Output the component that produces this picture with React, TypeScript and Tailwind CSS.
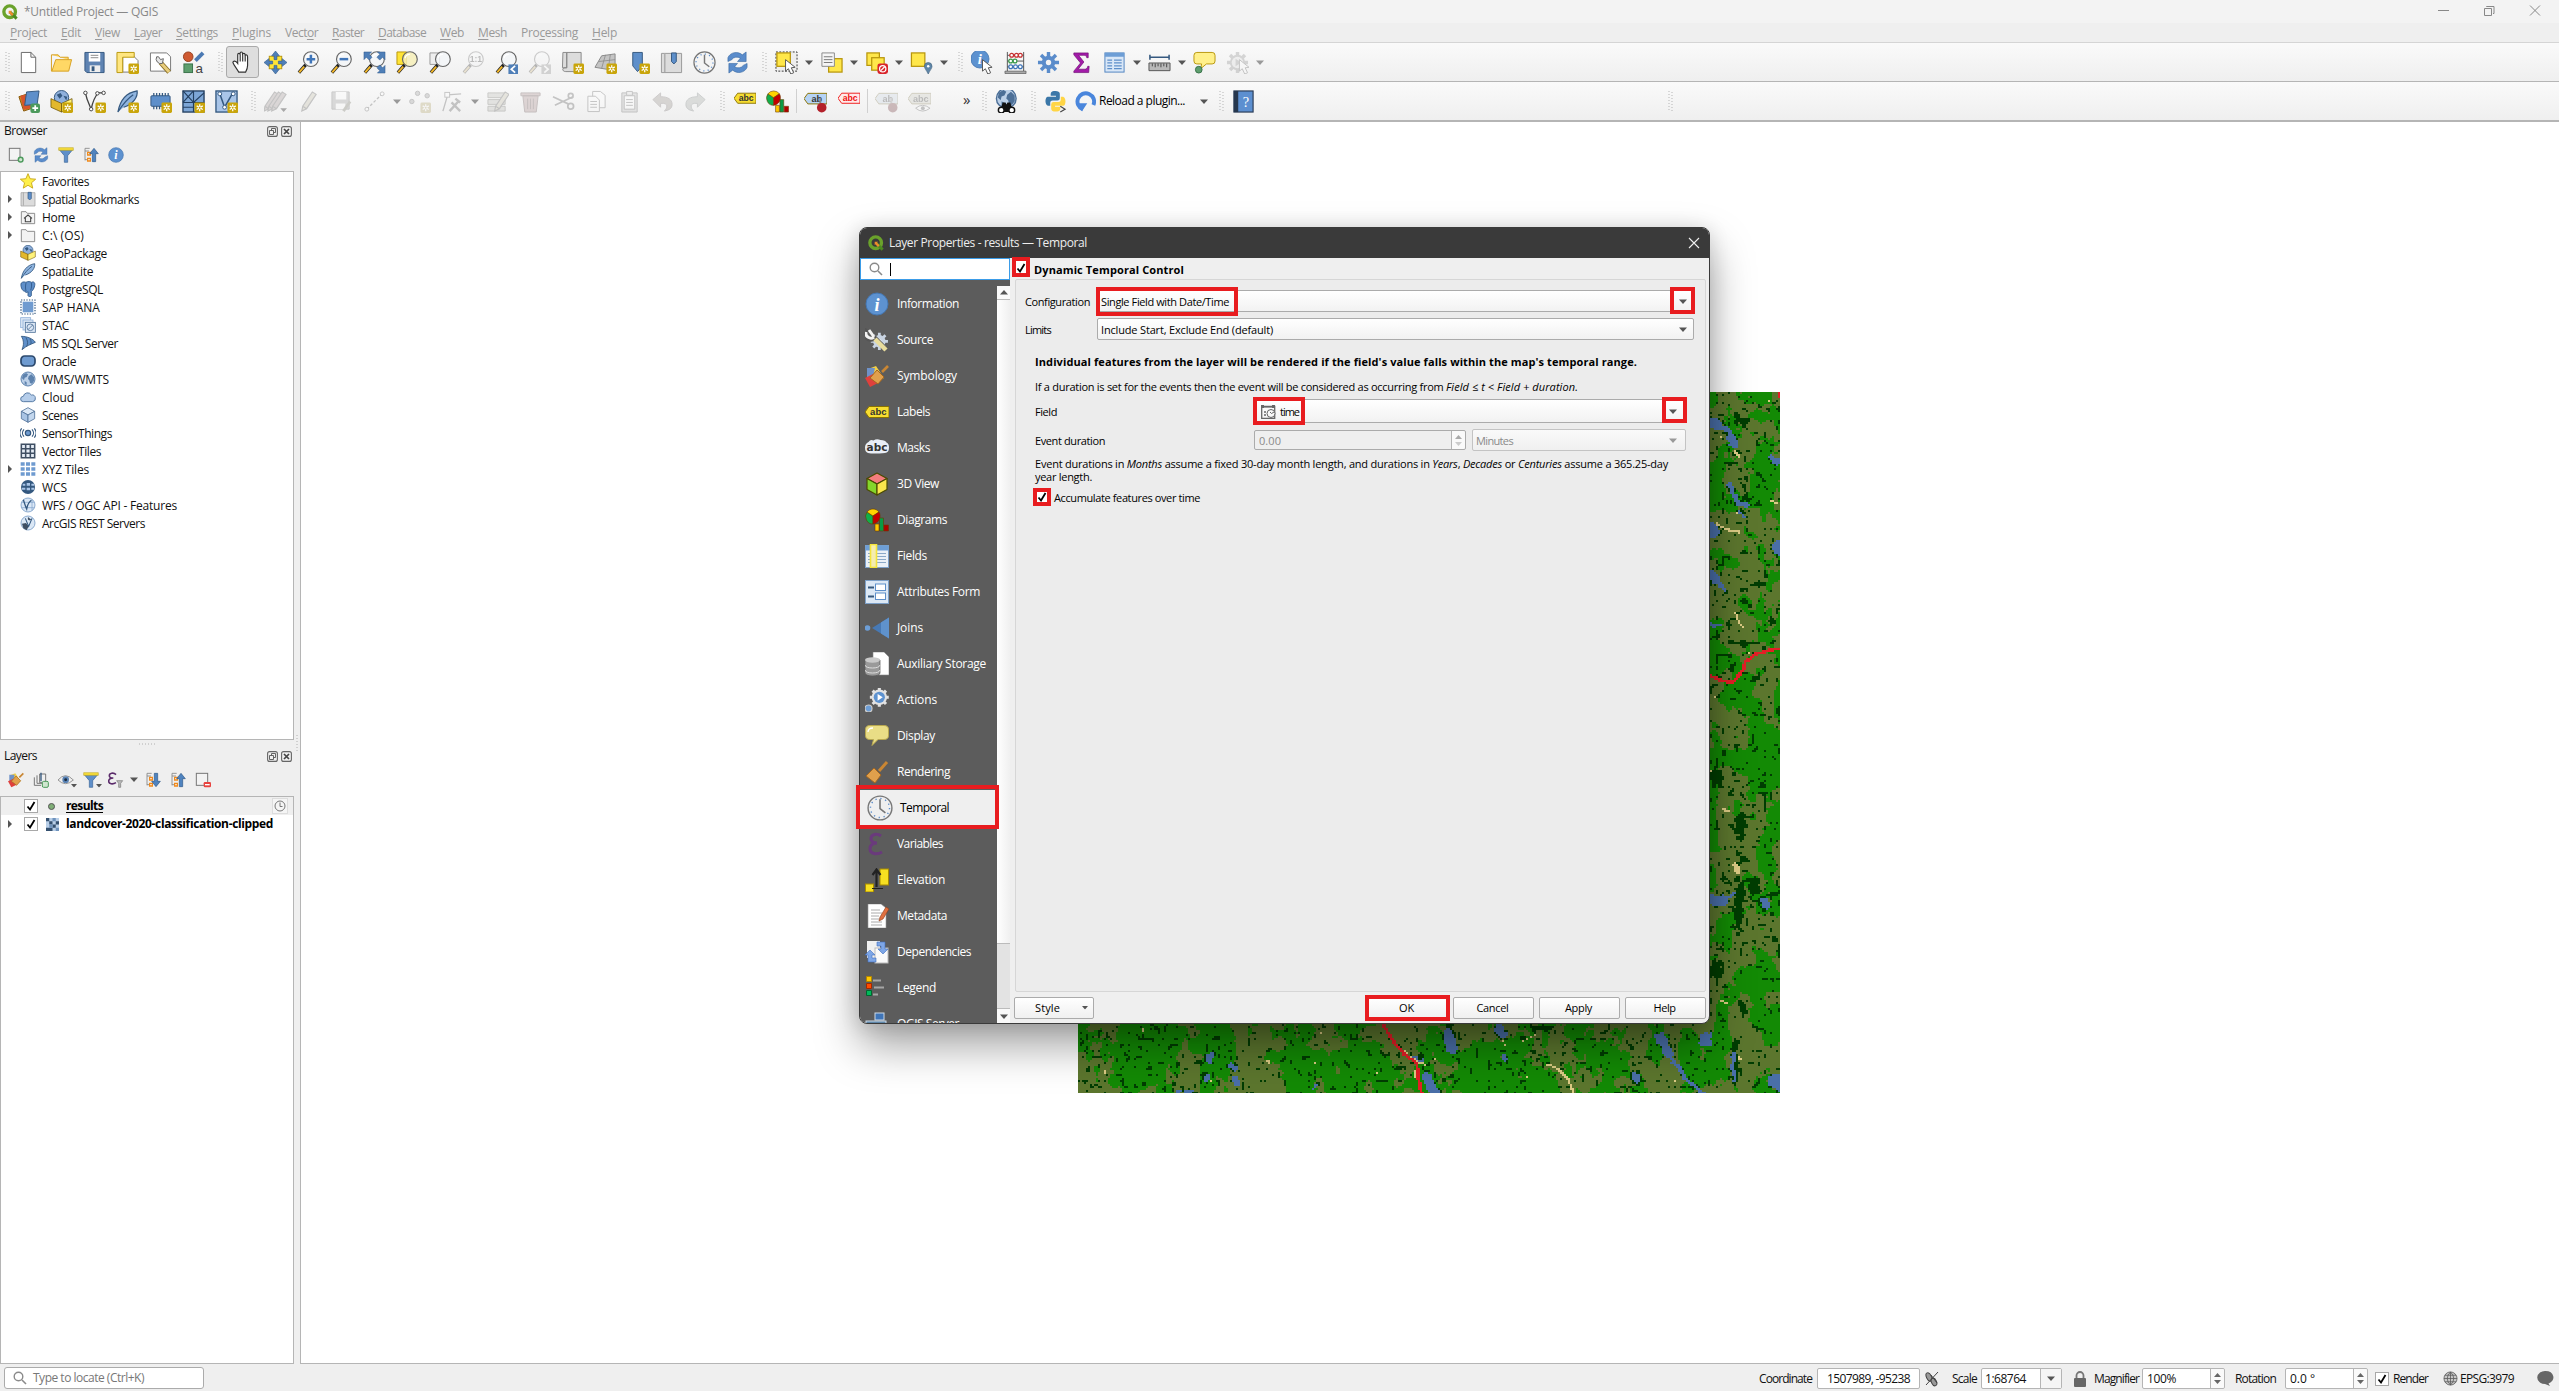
import React, { useLayoutEffect, useMemo, useRef, useState } from "react";

/* ---------- text fitted to a known advance width ---------- */
function Fit({ w, className = "", children }: { w: number; className?: string; children: React.ReactNode }) {
  const ref = useRef<HTMLSpanElement>(null);
  const [ls, setLs] = useState(0);
  useLayoutEffect(() => {
    const el = ref.current;
    if (!el) return;
    el.style.letterSpacing = "0px";
    const n = (el.textContent || "").length || 1;
    setLs((w - el.getBoundingClientRect().width) / n);
    el.style.letterSpacing = "";
  }, [w]);
  return (
    <span ref={ref} className={"inline-block shrink-0 whitespace-pre " + className} style={{ letterSpacing: ls }}>
      {children}
    </span>
  );
}

/* ---------- icons ---------- */
function S({ s = 24, off, children }: { s?: number; off?: boolean; children: React.ReactNode }) {
  return (
    <svg width={s} height={s} viewBox="0 0 24 24" fill="none" className={off ? "shrink-0 opacity-30 grayscale-[60%]" : "shrink-0"}>
      {children}
    </svg>
  );
}
const Star = () => (
  <g>
    <rect x="13" y="13" width="11" height="11" rx="1.5" fill="#c9a50b" />
    <path d="M18.5 14.8v7.4M15.3 16.6l6.4 3.8M21.7 16.6l-6.4 3.8" stroke="#fff" strokeWidth="1.3" />
    <circle cx="18.5" cy="18.5" r="1" fill="#c9a50b" />
  </g>
);
const Plus = () => (
  <g>
    <rect x="14" y="14" width="10" height="10" rx="2" fill="#4c9a5c" />
    <path d="M19 16v6M16 19h6" stroke="#fff" strokeWidth="1.8" />
  </g>
);
const Page = () => <path d="M4.500 1.500h10l5 5v16h-15z M14.500 1.500v5h5" fill="#fff" stroke="#666" />;
const Lens = ({ fill = "#f3f6f8" }: { fill?: string }) => (
  <g>
    <path d="M9 14.500 2 22.500" stroke="#222" strokeWidth="3.4" />
    <path d="M7.500 16.200 2.300 22.200" stroke="#f3b82a" strokeWidth="2" />
    <circle cx="14.500" cy="8.500" r="7.700" fill={fill} fillOpacity=".85" stroke="#666" strokeWidth="1.200" />
    <path d="M9.500 7.500a5 5 0 0 1 5-4" stroke="#fff" strokeWidth="1.500" />
  </g>
);
const Cursor = ({ x = 9, y = 8 }) => (
  <path transform={`translate(${x} ${y})`} d="M0 0v12l3-2.500 2.500 5.500 3-1.300-2.500-5.200 4-.5z" fill="#fff" stroke="#555" strokeWidth="1" />
);
const Refresh = () => (
  <g fill="#5a8ccb" stroke="#34669f" strokeWidth=".6">
    <path d="M2 11V7a9 8 0 0 1 15-3l4-3v10h-9l3-3.500A6 5 0 0 0 6 9z" />
    <path d="M22 13v4a9 8 0 0 1-15 3l-4 3V13h9l-3 3.500A6 5 0 0 0 18 15z" />
  </g>
);
const Globe = ({ c = "#5d82ad" }: { c?: string }) => (
  <g>
    <circle cx="12" cy="12" r="10.500" fill="#bcd0e8" stroke={c} strokeWidth="1.500" />
    <path d="M4 6l5-3 3 2-2 4-3 1-1 4-3-3zM13 8l4-3 4 4v6l-3 4-3-1-1-4-2-2zM7 15l3 2v4l-3-1z" fill={c} />
  </g>
);
const Abc = ({ fill, c = "#333", t = "abc" }: { fill: string; c?: string; t?: string }) => (
  <g>
    <path d="M0 12 4 6.500h20v11H4z" fill={fill} stroke={c === "#333" ? "#8a7200" : c} strokeWidth="1" />
    <text x="13.300" y="15.300" textAnchor="middle" fontSize="9.500" fontWeight="bold" fontFamily="Liberation Sans, sans-serif" fill={c}>{t}</text>
  </g>
);
const Pencil = ({ dx = 0, c = "#c9bd85" }) => (
  <path transform={`translate(${dx} 0)`} d="M4 22l1-5L15 2l4 2.500L9 19.500zM5 17l4 2.500" fill={c} stroke="#555" strokeWidth="1.200" />
);
const Gear = ({ c = "#5a8ccb", r = 7 }: { c?: string; r?: number }) => (
  <g stroke={c} strokeWidth="3.600">
    <path d="M12 1v22M1 12h22M4.200 4.200l15.600 15.600M19.800 4.200 4.200 19.800" />
    <circle cx="12" cy="12" r={r} fill={c} stroke="none" />
    <circle cx="12" cy="12" r="2.800" fill="#f4f4f4" stroke="none" />
  </g>
);
const Clock = ({ fill = "#f4f4f4" }) => (
  <g>
    <circle cx="12" cy="12" r="11" fill={fill} stroke="#777" strokeWidth="1.300" />
    <circle cx="12" cy="12" r="8.800" stroke="#5a8ccb" strokeWidth="1.300" strokeDasharray="1.200 3.410" />
    <path d="M12 4v8.500l5 4" stroke="#777" strokeWidth="1.500" />
  </g>
);
const Feather = () => <path d="M2 23C4 12 10 3 22 1c1 6-4 14-14 17M2 23C7 15 12 9 18 5" fill="#8fb4df" stroke="#34587f" strokeWidth="1.300" />;
const Pie = () => (
  <g stroke="#6b3b00" strokeWidth=".6">
    <path d="M8 8V16A7 7.500 0 0 1 2 4z" fill="#0fae4b" />
    <path d="M8 8 2 4a7.500 7.500 0 0 1 12 0z" fill="#ffd400" />
    <path d="M8 8l6-4a8 8 0 0 1-6 12z" fill="#c40000" />
    <path d="M10 16h4v7h-4z" fill="#ffc800" />
    <path d="M14.500 10h4v13h-4z" fill="#0a9a46" />
    <path d="M19 17h4.500v6H19z" fill="#b00000" />
  </g>
);
const Funnel = () => (
  <g>
    <path d="M2 4h20l-7.500 9v10h-5V13z" fill="#5f8fc9" stroke="#3a6599" />
    <path d="M1 1h22v4H1z" fill="#f5dc3c" stroke="#b59b10" strokeWidth=".7" />
  </g>
);
const Info = ({ r = 11 }) => (
  <g>
    <circle cx="12" cy="12" r={r} fill="#5d92d0" stroke="#4576b0" strokeWidth="1" />
    <text x="12" y="18.500" textAnchor="middle" fontSize="18" fontStyle="italic" fontWeight="bold" fontFamily="Liberation Serif, serif" fill="#fff">i</text>
  </g>
);
const Tree = ({ down }: { down?: boolean }) => (
  <g>
    <path d="M3 2v18M3 6h6M3 19h6M3 2h7" stroke="#888" strokeWidth="1.300" />
    <path d="M7 8h4v4H7zM7 17h4v4H7z" fill="#fff" stroke="#f08a1c" strokeWidth="2" />
    <path d={down ? "M14 2h5v12h4l-6.500 8L10 14h4z" : "M14 22h5V10h4l-6.500-8L10 10h4z"} fill="#4f83bf" stroke="#2d5788" />
  </g>
);
const Broom = () => (
  <g>
    <path d="M14 11 22 2" stroke="#c98633" strokeWidth="3" />
    <path d="M9 8l7 7-6 8L1 16z" fill="#e0a04c" stroke="#a4661f" />
  </g>
);
const Paint = () => (
  <g>
    <path d="M3 5l8-3 8 12-9 5z" fill="#f3cf45" /><path d="M2 4l8 0-2 9-6 3z" fill="#6f92c8" /><path d="M0 14l8-4 5 9-8 4z" fill="#e0403c" />
    <path d="M17 8 23 2" stroke="#c98633" strokeWidth="2.600" /><path d="M12 6l7 7-6 7-8-6z" fill="#e0a04c" stroke="#a4661f" />
  </g>
);
const YSq = ({ x, y, s = 14 }: { x: number; y: number; s?: number }) => <rect x={x} y={y} width={s} height={s} fill="#ffe74a" stroke="#b8960c" strokeWidth="1.300" />;
const Box3 = ({ a, b, c, st }: { a: string; b: string; c: string; st: string }) => (
  <g stroke={st} strokeWidth="1.200" strokeLinejoin="round"><path d="M12 1l10 5.500L12 12 2 6.500z" fill={a} /><path d="M2 6.500 12 12v11L2 17.500z" fill={b} /><path d="M22 6.500 12 12v11l10-5.500z" fill={c} /></g>
);
const GeoPkg = () => (
  <g><circle cx="12" cy="8" r="7.500" fill="#8fb0dc" stroke="#34587f" /><path d="M7 5l4-2 2 3-3 3zM14 6l4 1-1 4z" fill="#34587f" />
    <path d="M1 9l11 5v9L1 18z" fill="#e3b82c" stroke="#6b5200" strokeWidth=".8" /><path d="M23 9l-11 5v9l11-5z" fill="#fff27a" stroke="#6b5200" strokeWidth=".8" /></g>
);

const ICONS: Record<string, React.ReactNode> = {
  page: <Page />,
  folder: <path d="M1.500 4V21h18l3-12H6L2 21M1.500 4h7l2 2.500H19V9" fill="#ffd865" stroke="#d5a021" />,
  save: <g><path d="M2 1.500h20v21H4l-2-2z" fill="#5e83b2" stroke="#34587f" /><path d="M6 2h12v9H6z" fill="#fff" /><path d="M8 4.500h8M8 7h8" stroke="#888" /><path d="M7 15h11v7H7z" fill="#eee" /><path d="M9 16h3v5H9z" fill="#34587f" /></g>,
  layout: <g><path d="M7 5h11l5 5v12H7z" fill="#fff" stroke="#777" /><path d="M1 1.500h18v5H7v16H1z" fill="#ffe680" stroke="#b8960c" /><Star /></g>,
  layman: <g><path d="M1.500 2h17l4 4v15h-21z" fill="#fff" stroke="#777" /><path d="M12 12l9 10" stroke="#8a7028" strokeWidth="5" /><path d="M12 12l9 10" stroke="#e8cd7c" strokeWidth="3.200" /><path d="M8 6a5 5 0 0 0 6 7l1-5-3 1-2-3z" fill="#e6e6e6" stroke="#666" /></g>,
  style: <g><circle cx="6.500" cy="6" r="5" fill="#cf5a31" stroke="#96401f" /><path d="M14 10 22 2" stroke="#4b79b3" strokeWidth="4" /><rect x="2" y="13.500" width="9" height="9" fill="#5d9e6d" stroke="#39724a" /><text x="14" y="22.500" fontSize="14" fontFamily="Liberation Sans, sans-serif" fill="#444">a</text></g>,
  hand: <path d="M8 22C6 18 3 15 2 12c0-2 3-2 5 1V4c0-2 2.500-2 2.500 0V2.500c0-2 2.500-2 2.500 0V4c0-2 2.700-2 2.700 0v1.500c0-2 2.600-2 2.600.5V15c0 3-1 5-2 7zM9.600 4v7M12.200 4v7M14.800 5v6" fill="#fff" stroke="#333" strokeWidth="1.200" />,
  pan: <g><rect x="5.500" y="5.500" width="13" height="13" fill="#ffe436" stroke="#b8960c" /><path d="M12 0l4 5h-2.500v4h-3V5H8zM12 24l4-5h-2.500v-4h-3v4H8zM0 12l5-4v2.500h4v3H5V16zM24 12l-5-4v2.500h-4v3h4V16z" fill="#4f7fb8" stroke="#2d5788" strokeWidth=".6" /></g>,
  zin: <g><Lens /><path d="M14.500 4v9M10 8.500h9" stroke="#3f75b8" strokeWidth="2.600" /></g>,
  zout: <g><Lens /><path d="M10 8.500h9" stroke="#3f75b8" strokeWidth="2.600" /></g>,
  zfull: <g><Lens /><path d="M1 1h8L6.500 3.500l3 3-3 3-3-3L1 9zM23 1h-8l2.500 2.500-3 3 3 3 3-3L23 9zM23 23h-8l2.500-2.500-3-3 3-3 3 3L23 15z" fill="#4f7fb8" stroke="#2d5788" strokeWidth=".5" /></g>,
  zsel: <g><path d="M1 1h10v13H1z" fill="#ffe436" stroke="#b8960c" /><Lens fill="#f6efb8" /></g>,
  zlay: <g><path d="M1 2h10v12H1z" fill="#eee" stroke="#999" /><Lens /></g>,
  z11: <g><Lens /><text x="14.500" y="12" textAnchor="middle" fontSize="9" fontWeight="bold" fontFamily="Liberation Sans, sans-serif" fill="#333">1:1</text></g>,
  zlast: <g><Lens /><rect x="14" y="14" width="10" height="10" fill="#4f7fb8" /><path d="M21 15.500 17 19l4 3.500" stroke="#fff" strokeWidth="1.800" /></g>,
  znext: <g><Lens /><rect x="14" y="14" width="10" height="10" fill="#888" /><path d="M17 15.500l4 3.500-4 3.500" stroke="#fff" strokeWidth="1.800" /></g>,
  mapv: <g><path d="M2 1.500h4v16H1.500zM6 1.500h15v20H5c-4 0-4-4-1-4h2z" fill="#dcdcdc" stroke="#888" /><Star /></g>,
  map3: <g><path d="M1 17 8 5l14-2v14l-9 2z" fill="#c4c4c4" stroke="#888" /><path d="M5 11l17-2M12 4 8 18M17 4l-2 14" stroke="#888" strokeWidth=".8" /><Star /></g>,
  bmnew: <g><path d="M6 1.500h10v14l-5 6-5-6z" fill="#5e8fca" stroke="#34587f" /><Star /></g>,
  book: <g><path d="M1.500 2.500h21v20h-21z" fill="#dcdcdc" stroke="#999" /><path d="M5 2v20" stroke="#aaa" strokeWidth="1.500" /><path d="M12 2h5v9l-2.500 2.500L12 11z" fill="#5e8fca" stroke="#34587f" /></g>,
  clock: <Clock />,
  refresh: <Refresh />,
  sel: <g><rect x="1" y="1" width="22" height="20" stroke="#333" strokeDasharray="2 1.500" fill="#eee" /><YSq x={2} y={2} /><Cursor x={11} y={9} /></g>,
  form: <g><YSq x={9} y={8} /><path d="M2 2h13v14H2z" fill="#f5f5f5" stroke="#888" /><path d="M4 6h9M4 9h9M4 12h9" stroke="#777" /></g>,
  desel: <g><YSq x={2} y={2} s={13} /><YSq x={7} y={7} s={13} /><rect x="13" y="13" width="11" height="11" rx="2.500" fill="#d9242b" /><circle cx="18.500" cy="18.500" r="3.300" stroke="#fff" strokeWidth="1.300" /><path d="M16.500 20.500l4-4" stroke="#fff" strokeWidth="1.300" /></g>,
  loc: <g><YSq x={1.500} y={2} s={14} /><path d="M19 24c-2-4-4-6-4-8a4 4 0 0 1 8 0c0 2-2 4-4 8z" fill="#5f86a8" stroke="#3b5c7a" strokeWidth=".6" /><circle cx="19" cy="16" r="1.300" fill="#fff" /></g>,
  ident: <g><g transform="translate(-1 -2) scale(.86)"><Info /></g><Cursor x={12} y={9} /></g>,
  abacus: <g><path d="M3.500 1v20M20.500 1v20M3.500 4.500h17M3.500 10.500h17M3.500 16.500h17" stroke="#555" /><path d="M1 21h22v2.500H1z" fill="#aaa" stroke="#555" strokeWidth=".7" /><g fill="#fff" strokeWidth="1.300"><g stroke="#c63030"><circle cx="8" cy="4.500" r="2" /><circle cx="13" cy="4.500" r="2" /><circle cx="17" cy="4.500" r="2" /></g><g stroke="#3a9a4c"><circle cx="7" cy="10.500" r="2" /><circle cx="11.500" cy="10.500" r="2" /></g><g stroke="#3f75b8"><circle cx="7" cy="16.500" r="2" /><circle cx="12" cy="16.500" r="2" /><circle cx="17" cy="16.500" r="2" /></g></g></g>,
  gear: <Gear />,
  sigma: <path d="M4 2h15v5h-1.500c-.5-2-1-2.500-3-2.500H9l5.500 7L8.500 19H15c2 0 3-.5 3.500-3H20l-.500 6.500H4V21l7-8.500L4 4z" fill="#a21ba8" stroke="#6f0f74" strokeWidth=".7" />,
  table: <g><rect x="2" y="2" width="20" height="20" fill="#d9e7f7" stroke="#4f83bf" /><path d="M2 2h20v4H2z" fill="#6d9ed6" /><path d="M4.500 9.500h5M4.500 12.500h5M4.500 15.500h5M4.500 18.500h5M11.500 9.500h8M11.500 12.500h8M11.500 15.500h8M11.500 18.500h8" stroke="#5d8fca" strokeWidth="1.300" /></g>,
  ruler: <g><path d="M2 6.500h20M2 4v5M22 4v5" stroke="#34587f" strokeWidth="1.600" /><path d="M1 12.500h22v8H1z" fill="#b9b9b9" stroke="#555" /><path d="M4.500 13v3M7.500 13v4M10.500 13v3M13.500 13v4M16.500 13v3M19.500 13v4" stroke="#444" /></g>,
  tip: <g><path d="M4 1.500h16q3 0 3 3v6q0 3-3 3h-6l-6 5 1-5H4q-3 0-3-3v-6q0-3 3-3z" fill="#fff08a" stroke="#b8960c" /><circle cx="6" cy="19.500" r="3.500" fill="#5d9e6d" stroke="#39724a" /></g>,
  play: <g><Gear c="#888" r={8} /><circle cx="12" cy="12" r="6" fill="#ddd" /><path d="M10 8l6 4-6 4z" fill="#888" /><Cursor x={14} y={9} /></g>,
  data: <g><path d="M2 7l9-3 5 15-9 3z" fill="#cf8a1f" stroke="#8a5a0c" /><path d="M5 5h9v15H5z" fill="#d7552b" transform="rotate(-12 9 12)" /><path d="M10 2l13-1-2 14-13 1z" fill="#5e8fca" stroke="#34587f" /><Plus /></g>,
  geonew: <g><GeoPkg /><Star /></g>,
  vnew: <g><path d="M2.500 3C4 11 7 16 8.500 20 10 13 12 7 16 3h5" stroke="#444" strokeWidth="1.400" /><g fill="#fff" stroke="#444"><circle cx="2.500" cy="3" r="1.800" /><circle cx="15" cy="3.500" r="1.800" /><circle cx="21.500" cy="3" r="1.800" /><circle cx="8.500" cy="20" r="1.800" /></g><Star /></g>,
  feather: <g><Feather /><Star /></g>,
  chip: <g><path d="M5 3v17M8 3v17M11 3v17M14 3v17M17 3v17M20 3v17" stroke="#34587f" strokeWidth="1.300" /><rect x="2" y="6" width="20" height="11" rx="1" fill="#5e8fca" stroke="#34587f" /><Star /></g>,
  mesh: <g><rect x="1" y="1" width="22" height="22" fill="#7da6d6" stroke="#233f60" strokeWidth="1.400" /><path d="M1 13h22M12 1v22M1 1l11 12M12 1 1 13M23 3 12 13M1 18h11" stroke="#233f60" strokeWidth="1.200" /><Star /></g>,
  vshape: <g><rect x="1" y="1" width="22" height="22" fill="#a9c5e8" stroke="#34587f" strokeWidth="1.400" /><path d="M5 4l5 14L18 4" stroke="#34587f" strokeWidth="1.600" /><g fill="#fff" stroke="#34587f"><circle cx="5" cy="4" r="2" /><circle cx="19" cy="4" r="2" /><circle cx="10" cy="18" r="2" /></g><Star /></g>,
  pencils: <g><Pencil dx={-4} c="#b08f8f" /><Pencil dx={0} c="#b08f8f" /><Pencil dx={4} c="#b08f8f" /><path d="M17 19h7l-3.500 4z" fill="#000" /></g>,
  pencil: <Pencil dx={1} />,
  saveed: <g><path d="M2 2h18v18H2z" fill="#999" stroke="#666" /><path d="M6 2h11v8H6zM6 14h10v6H6z" fill="#fff" /><path d="M14 22l7-10" stroke="#775" strokeWidth="3" /></g>,
  line: <g><path d="M4 20 20 4" stroke="#555" strokeDasharray="3 2" strokeWidth="1.400" /><g fill="#fff" stroke="#555"><circle cx="4" cy="20" r="2" /><circle cx="20" cy="4" r="2" /></g></g>,
  pts: <g><g fill="#999" stroke="#555"><circle cx="10" cy="3.500" r="2.300" /><circle cx="4" cy="12" r="2.300" /><circle cx="20" cy="6" r="2.300" /></g><Star /></g>,
  vert: <g><path d="M2 22 7 5l14-1" stroke="#555" strokeWidth="1.400" /><rect x="4" y="2.500" width="5" height="5" fill="#fff" stroke="#555" /><path d="M9 22l9-10M11 13l9 9M15 9l5 4" stroke="#555" strokeWidth="2.500" /></g>,
  multi: <g><path d="M2 3h18v5H2zM2 10h18v5H2zM2 17h18v5H2z" fill="#bba" stroke="#665" /><Pencil dx={5} /></g>,
  trash: <g><path d="M4 6h16l-2 17H6zM2 3h20v3H2z" fill="#c98080" stroke="#744" /><path d="M9 9v11M12 9v11M15 9v11" stroke="#744" /></g>,
  cut: <g stroke="#555" strokeWidth="1.800"><path d="M1 7l17 8M3 16 22 7" /><circle cx="19.500" cy="17" r="3" /><circle cx="19.500" cy="6" r="2.500" /></g>,
  copy: <g fill="#fff" stroke="#555"><path d="M8 1.500h8l5 4v13H8z" /><path d="M3 6.500h8l4 4v12H3z" /><path d="M5.500 12h7M5.500 15h7M5.500 18h7" /></g>,
  paste: <g stroke="#555"><path d="M4 3h16v20H4z" fill="#bbb" /><path d="M6.500 6h11v14h-11z" fill="#fff" /><path d="M9 1.500h6v4H9z" fill="#ddd" /><path d="M8.500 10h7M8.500 13h7M8.500 16h7" /></g>,
  undo: <path d="M2 10l8-7v4c8 0 12 3 12 8s-4 6-8 7c3-3 5-9-4-8v4z" fill="#9a8a7a" stroke="#766" />,
  redo: <path d="M22 10l-8-7v4C6 7 2 10 2 15s4 6 8 7c-3-3-5-9 4-8v4z" fill="#9aa59a" stroke="#677" />,
  abc: <g transform="translate(0 -3)"><Abc fill="#f7dd31" /></g>,
  pie: <Pie />,
  abpin: <g><g transform="translate(0 -3)"><Abc fill="#b5d3f5" t="ab" /></g><path d="M17 8v8" stroke="#888" strokeWidth="2" /><circle cx="18.500" cy="18.500" r="5" fill="#b3202a" /></g>,
  abred: <g transform="translate(0 -3)"><Abc fill="#ffeaea" c="#ee1111" /></g>,
  abeye: <g><g transform="translate(0 -3)"><Abc fill="#c8c8a8" /></g><path d="M8 19q7-6 15 0-8 6-15 0z" fill="#fff" stroke="#555" /><circle cx="15.500" cy="19" r="2" fill="#555" /></g>,
  metas: <g><g transform="translate(0 -3) scale(.98)"><Globe c="#4c6f97" /></g><path d="M5 23l3-10h3l1 2 1-2h3l3 10z" fill="#111" /><circle cx="6.500" cy="21" r="3" fill="#fff" stroke="#111" strokeWidth="1.500" /><circle cx="17.500" cy="21" r="3" fill="#fff" stroke="#111" strokeWidth="1.500" /></g>,
  python: <g><path d="M12 1c-5 0-5 1.500-5 5h5.500v1H4c-3 0-3.500 8 0 9.500h2.500V13q0-2 2.500-2h5q2.500 0 2.500-2.500V4c0-2-2-3-4.500-3z" fill="#3b77a8" /><path d="M12 22.500c5 0 5-1.500 5-5h-5.500v-1H20c3 0 3.500-8 0-9.500h-2.500v3.500q0 2-2.500 2h-5Q7.500 12.500 7.500 15v4.500c0 2 2 3 4.500 3z" fill="#ffd545" /><path d="M17 17l5 3-5 3" stroke="#444" strokeWidth="1.200" /></g>,
  reload: <g><path d="M9 21A9.500 9.500 0 1 1 21 16" stroke="#4a86dc" strokeWidth="4.500" /><path d="M2 14l12 0-6 9z" fill="#4a86dc" /></g>,
  help: <g><rect x="2" y="1" width="20" height="22" fill="#5c8fd0" stroke="#2a3b55" strokeWidth="1.200" /><rect x="2" y="1" width="4.500" height="22" fill="#26374e" /><text x="14.500" y="17.500" textAnchor="middle" fontSize="15" fontFamily="Liberation Serif, serif" fill="#fff">?</text></g>,
  /* browser tree */
  star: <path d="M12 1l3.200 7.600 8.300.7-6.300 5.400 1.900 8L12 18.400 4.900 22.700l1.900-8L.5 9.300l8.300-.7z" fill="#fff04a" stroke="#c9a818" strokeWidth="1.400" />,
  home: <g><path d="M2 4h7l2 2.500h11V22H2z" fill="#f3f3f3" stroke="#888" strokeWidth="1.400" /><path d="M6 14l6-5 6 5M8 13v6h8v-6" stroke="#444" strokeWidth="1.600" /></g>,
  dir: <path d="M2 4h7l2 2.500h11V22H2z" fill="#f3f3f3" stroke="#888" strokeWidth="1.400" />,
  geopkg: <GeoPkg />,
  feath: <Feather />,
  pg: <g><path d="M2 3c3-3 6-1 7-1 3-2 7-1 8 0 4-2 6 1 5 5-1 5-3 7-5 9v6c-1 2-4 2-5 0v-6c-1 2-5 1-5-1-4 1-7-9-5-12z" fill="#5f8fc9" stroke="#2d5788" strokeWidth="1.300" /><path d="M9 3c-1 4-1 8 0 12M17 3c1 4 0 8-1 11" stroke="#2d5788" strokeWidth="1.300" /></g>,
  hana: <g><rect x="4" y="4" width="16" height="16" fill="#6f9bd0" /><rect x="1.500" y="1.500" width="21" height="21" stroke="#34587f" strokeWidth="1.800" strokeDasharray="2 2" /></g>,
  stac: <g fill="#dbe7f5" stroke="#8fb0d8" strokeWidth="1.200"><rect x="1" y="1" width="15" height="15" /><rect x="4.500" y="4.500" width="15" height="15" /><rect x="8" y="8" width="15" height="15" stroke="#4c6f97" /><circle cx="15.500" cy="15.500" r="5" stroke="#4c6f97" /><path d="M12 19l7-7" stroke="#4c6f97" /></g>,
  mssql: <path d="M2 2c9 0 18 4 21 9-7 3-13 5-20 11 3-7 3-14-1-20zM9 4c3 5 3 9 1 13M15 6c2 3 2 6 1 8" fill="#5f8fc9" stroke="#34587f" strokeWidth="1.300" />,
  oracle: <rect x="1.500" y="4.500" width="21" height="15" rx="5.500" fill="#6f9bd0" stroke="#2d4a6e" strokeWidth="2.600" />,
  globe: <Globe />,
  cloud: <path d="M5 19a4 4 0 0 1 0-8 6.500 6.500 0 0 1 12-2 5 5 0 0 1 2 10z" fill="#b5cdea" stroke="#5a7da6" strokeWidth="1.500" />,
  scenes: <g><Box3 a="#dbe8f6" b="#a9c4e4" c="#c3d7ee" st="#4c6f97" /></g>,
  sensor: <g stroke="#34587f" strokeWidth="1.800"><circle cx="12" cy="12" r="4" fill="#6f9bd0" /><path d="M6 6.500a8 8 0 0 0 0 11M18 6.500a8 8 0 0 1 0 11M2.500 5a11 11 0 0 0 0 14M21.500 5a11 11 0 0 1 0 14" /></g>,
  vtile: <path d="M2 2h20v20H2zM2 8.500h20M2 15.500h20M8.500 2v20M15.500 2v20" stroke="#3f4f63" strokeWidth="2.300" fill="#e6edf6" />,
  xyz: <path d="M1 2h6v5H1zM9 2h6v5H9zM17 2h6v5h-6zM1 9.500h6v5H1zM9 9.500h6v5H9zM17 9.500h6v5h-6zM1 17h6v5H1zM9 17h6v5H9zM17 17h6v5h-6z" fill="#6f9bd0" />,
  wcs: <g><circle cx="12" cy="12" r="10.500" fill="#34587f" /><path d="M4 7h4v3H4zM10 6h5v4h-5zM17 7h4v3h-4zM3 13h5v3H3zM10 13h5v4h-5zM17 13h4v3h-4z" fill="#a9c5e8" /></g>,
  wfs: <g><circle cx="12" cy="12" r="10.500" fill="#dbe8f6" stroke="#7da0c8" strokeWidth="1.300" /><path d="M2 8h20M2 16h20M18 4v16" stroke="#7da0c8" /><path d="M5 4c2 6 3 10 5 14 1-6 3-10 7-13" stroke="#34587f" strokeWidth="2" /></g>,
  arc: <g><circle cx="12" cy="12" r="10.500" fill="#dbe8f6" stroke="#7da0c8" strokeWidth="1.300" /><path d="M3 13l6-1 4 5-3 6-5-3zM12 3c-1 5 1 6 5 4" fill="#3f4f63" /><path d="M8 5l5 12 5-12" stroke="#34587f" strokeWidth="1.600" /></g>,
  addl: <g><rect x="2" y="2" width="16" height="18" fill="#f3f3f3" stroke="#777" strokeWidth="1.500" /><circle cx="19" cy="19" r="3.500" fill="#cfe6cf" stroke="#4c9a5c" strokeWidth="2.200" /></g>,
  rml: <g><rect x="2" y="2" width="17" height="18" fill="#f3f3f3" stroke="#777" strokeWidth="1.500" /><rect x="13" y="15" width="11" height="8" rx="2" fill="#e8433f" /><path d="M15 19h7" stroke="#fff" strokeWidth="2" /></g>,
  funnel: <Funnel />,
  info: <Info />,
  tup: <Tree />,
  tdown: <Tree down />,
  paint: <Paint />,
  group: <g><path d="M2 8v12h10M6 5v12h8M10 3h9v13h-9z" stroke="#777" strokeWidth="1.500" /><path d="M12 1v13" stroke="#34587f" strokeWidth="2" /><rect x="14" y="14" width="9" height="9" rx="2" fill="#cfe6cf" stroke="#4c9a5c" strokeWidth="1.500" /></g>,
  eye: <g><path d="M0 12q11-13 23 0-12 11-23 0z" fill="#eee" stroke="#888" strokeWidth="1.300" /><circle cx="11.500" cy="11.500" r="5" fill="#5a83b5" /><circle cx="11.500" cy="11.500" r="2.200" fill="#1c2c40" /></g>,
  eps: <g><path d="M12 4C8 0 2 2 2 5.500 2 8 5 9 8 9 4 9 1 10.500 1 14c0 4 6 5 11 2" stroke="#5b2b6b" strokeWidth="2.400" /><path d="M13 13h9l-3 4v6h-3v-6z" fill="#bbb" stroke="#777" /></g>,
  /* dialog pages */
  source: <g><g transform="translate(5 4) scale(.78)"><Gear c="#c9d4e2" r={8} /></g><path d="M2 1a6 6 0 0 0 8 9l11 11" stroke="#555" strokeWidth="4.500" /><path d="M1 4a5 5 0 0 0 8 5M9 9 4 2" stroke="#f2f2f2" strokeWidth="3" /><path d="M10 11l11 11" stroke="#e8dc9c" strokeWidth="4.500" /></g>,
  labels: <Abc fill="#f7dd31" />,
  masks: <g><path d="M3.500 6q2-3 5-1.500 3-2 7-.5 5 0 6 2.500 2.500 1 2.500 5 0 5-4 5.500-12 1-17 0-3-1-3-5.500 0-4 3.500-5.500z" fill="#e9eef6" /><text x="12" y="15" textAnchor="middle" fontSize="10.500" fontWeight="bold" fontFamily="DejaVu Sans, sans-serif" fill="#333">abc</text></g>,
  cube: <Box3 a="#f47d7d" b="#84d62b" c="#f9e54c" st="#4a4a00" />,
  fields: <g><rect x=".5" y="1.500" width="23" height="22" fill="#eaf0f7" stroke="#7da0c8" /><path d="M.5 1.500h23v5H.5z" fill="#6d9ed6" /><path d="M3 9.500h18M3 12.500h18M3 15.500h18M3 18.500h18" stroke="#8aa8c8" /><rect x="5.500" y=".5" width="6" height="23" fill="#f4ecb0" stroke="#f3e33a" strokeWidth="1.600" /></g>,
  attr: <g><rect x=".5" y=".5" width="23" height="23" fill="#dce8f5" stroke="#7da0c8" /><path d="M3 7.500h6M3 16.500h6" stroke="#34587f" strokeWidth="1.800" /><rect x="10.500" y="4" width="10" height="6.500" fill="#fff" stroke="#5d8fca" /><rect x="10.500" y="13" width="10" height="6.500" fill="#fff" stroke="#5d8fca" /></g>,
  joins: <g><circle cx="2.500" cy="12" r="2.800" fill="#6d9ed6" /><path d="M7 12 24 1.500v21z" fill="#4779b5" /><path d="M16 6.400 24 1.500v21l-8-4.900z" fill="#5f92cc" /></g>,
  aux: <g><path d="M8 0h11l5 5v18H8z" fill="#fff" stroke="#888" strokeWidth=".6" /><path d="M0 8v13c0 4 15 4 15 0V8z" fill="#9a9a9a" stroke="#555" strokeWidth=".7" /><ellipse cx="7.500" cy="8" rx="7.500" ry="2.700" fill="#c9c9c9" /><path d="M0 13c0 4 15 4 15 0M0 18c0 4 15 4 15 0" stroke="#ddd" /></g>,
  actions: <g><g transform="translate(4 -1) scale(.86)"><Gear c="#e2e2e2" r={9} /><circle cx="12" cy="12" r="6.500" fill="#5d92d0" /><path d="M10 8l6 4-6 4z" fill="#fff" /></g><circle cx="3.500" cy="20.500" r="3.500" fill="#6d9ed6" stroke="#ccc" strokeWidth="1.200" /></g>,
  display: <g><path d="M5 1.500h14q4.500 0 4.500 4v6q0 4-4.500 4h-6l-6 6 1.500-6H5q-4.500 0-4.500-4v-6q0-4 4.500-4z" fill="#e9dd86" stroke="#b8a850" /><path d="M3 8q0-4 5-4" stroke="#fff" strokeWidth="1.300" /></g>,
  broom: <Broom />,
  temporal: <Clock fill="#efefef" />,
  vars: <path d="M16 4C12 1 6 2 6 6.500 6 10 9 11 12 11 7 11 5 13 5 17c0 5 7 6 12 3" stroke="#6a3a7c" strokeWidth="3" />,
  elev: <g><rect x="15" y="1" width="8.500" height="16" fill="#f7e021" stroke="#a88b00" /><rect x=".5" y="16" width="8" height="8" fill="#f7e021" stroke="#a88b00" /><path d="M11.500 19V3M7.500 7l4-5.500 4 5.500" stroke="#222" strokeWidth="2.200" /><path d="M7 20.500h11" stroke="#222" /></g>,
  meta: <g><path d="M3 0h13l5 4v20H3z" fill="#fff" stroke="#999" strokeWidth=".6" /><path d="M6 6h9M6 9h11M6 12h8M6 15h8M6 18h11M6 21h11" stroke="#aaa" /><path d="M14 17l1-4 6-10 3 2-6 10z" fill="#e07040" stroke="#8f3c18" strokeWidth=".6" /></g>,
  deps: <g><rect x="2" y="1" width="13" height="17" fill="#f0f0f0" /><rect x="10" y="8" width="13" height="15" fill="#fafafa" stroke="#bbb" /><path d="M12 2h8v7h3l-5 5-5-5h3V6h-4zM11 22H3v-7H0l5-5 5 5H7v3h4z" fill="#7ea6e6" stroke="#3f6fbf" strokeWidth=".6" /></g>,
  legend: <g><path d="M1.500.5h5v5h-5z" fill="#ffc800" stroke="#b38600" /><path d="M1.500 7.500h5v5h-5z" fill="#ff4a00" stroke="#a02a00" /><path d="M1.500 14.500h5v5h-5z" fill="#00b85a" stroke="#00662e" /><path d="M8 4.500h8M9 11.500h10M8 18.500h5" stroke="#a6a6a6" strokeWidth="1.800" /></g>,
  server: <g><rect x="10" y="1" width="9" height="7" fill="#3f75b8" stroke="#cdd9e6" /><rect x="1" y="9" width="20" height="8" fill="#5f86a8" stroke="#cdd9e6" /></g>,
};
const Ic = ({ n, s = 24, off }: { n: string; s?: number; off?: boolean }) => <S s={s} off={off}>{ICONS[n]}</S>;

const QLogo = ({ s = 18 }: { s?: number }) => (
  <S s={s}>
    <circle cx="11.500" cy="11.500" r="8.700" stroke="#6aa22b" strokeWidth="5" />
    <path d="M12 12l10 10" stroke="#4c8a20" strokeWidth="4.500" />
    <path d="M10 10h5l-1.500 1.500 4 4-2.500 2.500-4-4L10 15z" fill="#f08a2c" />
  </S>
);
const Tri = ({ c = "#555", className = "" }: { c?: string; className?: string }) => (
  <svg width="8" height="5" viewBox="0 0 8 5" className={"shrink-0 " + className}><path d="M0 .5h8L4 5z" fill={c} /></svg>
);
const Mag = () => (
  <svg width="14" height="14" viewBox="0 0 14 14" fill="none" className="shrink-0"><circle cx="5.500" cy="5.500" r="4.300" stroke="#8a8a8a" strokeWidth="1.400" /><path d="M9 9l4 4" stroke="#8a8a8a" strokeWidth="1.600" /></svg>
);
const Check = ({ border = true }: { border?: boolean }) => (
  <span className={"flex h-[14px] w-[14px] shrink-0 items-center justify-center bg-white " + (border ? "border border-[#a8a8a8]" : "")}>
    <svg width="10" height="10" viewBox="0 0 10 10" fill="none"><path d="M1.500 5.500 4 8.500 8.500 1" stroke="#000" strokeWidth="1.800" /></svg>
  </span>
);

/* ---------- toolbars ---------- */
const Handle = ({ w = "w-4" }: { w?: string }) => (
  <span className={"flex shrink-0 justify-center pl-[4px] " + w}>
    <svg width="5" height="20"><path d="M1 0v20M4 1v19" stroke="#b5b5b5" strokeDasharray="1 2" /></svg>
  </span>
);
const Bar = ({ items }: { items: string[] }) => (
  <>
    {items.map((it, i) => {
      if (it === "|") return <Handle key={i} />;
      if (it === "v") return <span key={i} className="flex w-3 shrink-0 justify-center"><Tri /></span>;
      if (it === "w") return <span key={i} className="flex w-3 shrink-0 justify-center"><Tri c="#999" /></span>;
      if (it === "/") return <span key={i} className="flex w-[5px] shrink-0 justify-center"><span className="h-6 w-px bg-[#d0d0d0]" /></span>;
      const off = it[0] === "-";
      const n = off ? it.slice(1) : it;
      const size = n === "abc" || n === "abred" ? 22 : 23;
      return (
        <span key={i} className={"flex h-[32px] w-[33px] shrink-0 items-center justify-center " + (n === "hand" ? "rounded-[3px] border border-[#aaa] bg-[#dedede]" : "")}>
          <Ic n={n} s={size} off={off} />
        </span>
      );
    })}
  </>
);
const ROW1 = ["page", "folder", "save", "layout", "layman", "style", "|", "hand", "pan", "zin", "zout", "zfull", "zsel", "zlay", "-z11", "zlast", "-znext", "mapv", "map3", "bmnew", "book", "clock", "refresh", "|", "sel", "v", "form", "v", "desel", "v", "loc", "v", "|", "ident", "abacus", "gear", "sigma", "table", "v", "ruler", "v", "tip", "-play", "w"];
const ROW2 = ["data", "geonew", "vnew", "feather", "chip", "mesh", "vshape", "|", "-pencils", "-pencil", "-saveed", "-line", "w", "-pts", "-vert", "w", "-multi", "-trash", "-cut", "-copy", "-paste", "-undo", "-redo", "|", "abc", "pie", "/", "abpin", "abred", "/", "-abpin", "-abeye"];
const MENUS: [string, number, number][] = [["Project", 0, 37], ["Edit", 0, 20], ["View", 0, 25], ["Layer", 0, 28], ["Settings", 0, 42], ["Plugins", 0, 39], ["Vector", 4, 33], ["Raster", 0, 32], ["Database", 0, 48], ["Web", 0, 24], ["Mesh", 0, 29], ["Processing", 3, 57], ["Help", 0, 25]];

/* ---------- browser and layers panels ---------- */
const TREE: [string, string, number, boolean?][] = [
  ["star", "Favorites", 47], ["book", "Spatial Bookmarks", 97, true], ["home", "Home", 33, true], ["dir", "C:\\ (OS)", 42, true], ["geopkg", "GeoPackage", 65],
  ["feath", "SpatiaLite", 51], ["pg", "PostgreSQL", 61], ["hana", "SAP HANA", 58], ["stac", "STAC", 27], ["mssql", "MS SQL Server", 76], ["oracle", "Oracle", 34],
  ["globe", "WMS/WMTS", 67], ["cloud", "Cloud", 32], ["scenes", "Scenes", 36], ["sensor", "SensorThings", 70], ["vtile", "Vector Tiles", 59], ["xyz", "XYZ Tiles", 47, true],
  ["wcs", "WCS", 25], ["wfs", "WFS / OGC API - Features", 135], ["arc", "ArcGIS REST Servers", 103],
];
const Exp = ({ on }: { on?: boolean }) => <span className="flex w-[18px] shrink-0 justify-center">{on && <svg width="4" height="8"><path d="M0 0l4 4-4 4z" fill="#555" /></svg>}</span>;
const PanelHead = ({ t, w }: { t: string; w: number }) => (
  <div className="flex h-[18px] shrink-0 items-center pl-1 pr-[2px]">
    <Fit w={w}>{t}</Fit>
    <span className="ml-auto flex gap-[3px]">
      <svg width="11" height="11" fill="none"><rect x=".6" y=".6" width="9.800" height="9.800" rx="2" stroke="#666" strokeWidth="1.100" /><path d="M2.500 4.500h4v4h-4zM4.500 4.500v-2h4v4h-2" stroke="#555" strokeWidth=".9" /></svg>
      <svg width="11" height="11" fill="none"><rect x=".6" y=".6" width="9.800" height="9.800" rx="2" stroke="#666" strokeWidth="1.100" /><path d="M3 3l5 5M8 3 3 8" stroke="#444" strokeWidth="1.700" /></svg>
    </span>
  </div>
);
const Tool = ({ n, menu }: { n: string; menu?: boolean }) => (
  <span className="flex w-[25px] shrink-0 items-end justify-center"><Ic n={n} s={16} />{menu && <Tri className="-ml-[4px] -mr-[4px] scale-75" />}</span>
);

/* ---------- classified land-cover raster ---------- */
type P = [number, number];
const hash = (x: number, y: number, s: number) => {
  let h = (x * 374761393 + y * 668265263 + s * 974634777) | 0;
  h = Math.imul(h ^ (h >>> 13), 1274126177);
  return ((h ^ (h >>> 16)) >>> 0) / 4294967295;
};
const noise = (x: number, y: number, s: number) => {
  const xi = Math.floor(x), yi = Math.floor(y), fx = x - xi, fy = y - yi;
  const u = fx * fx * (3 - 2 * fx), v = fy * fy * (3 - 2 * fy);
  const a = hash(xi, yi, s), b = hash(xi + 1, yi, s), c = hash(xi, yi + 1, s), d = hash(xi + 1, yi + 1, s);
  return a + (b - a) * u + (c - a) * v + (a - b - c + d) * u * v;
};
const segDist = (x: number, y: number, pts: P[]) => {
  let m = 1e9;
  for (let i = 0; i < pts.length - 1; i++) {
    const [ax, ay] = pts[i], [bx, by] = pts[i + 1];
    const dx = bx - ax, dy = by - ay, l = dx * dx + dy * dy || 1;
    const t = Math.max(0, Math.min(1, ((x - ax) * dx + (y - ay) * dy) / l));
    m = Math.min(m, Math.hypot(x - ax - t * dx, y - ay - t * dy));
  }
  return m;
};
const ROADS: P[][] = [[[1700, 671], [1710, 675], [1722, 680], [1732, 681], [1738, 674], [1743, 668], [1744, 661], [1755, 653], [1770, 649], [1782, 647]], [[1380, 1020], [1392, 1040], [1404, 1054], [1416, 1062], [1417, 1075], [1421, 1095]], [[1778, 392], [1780, 397]]];
const WATER: [number, P[]][] = [
  [5, [[1708, 420], [1716, 424]]], [2.5, [[1716, 424], [1728, 430], [1735, 444]]], [4, [[1730, 438], [1733, 443]]], [3, [[1770, 457], [1776, 461]]], [2.5, [[1729, 484], [1732, 494], [1738, 502], [1748, 504]]], [2, [[1739, 511], [1742, 514]]],
  [6, [[1708, 526], [1713, 530]]], [6, [[1777, 546], [1780, 549]]], [5, [[1708, 572], [1714, 578]]], [2.5, [[1714, 578], [1723, 588]]], [2, [[1708, 624], [1717, 624]]], [5, [[1708, 898], [1722, 900]]], [1.500, [[1722, 900], [1733, 892]]],
  [3.5, [[1763, 900], [1765, 905]]], [5, [[1704, 1036], [1706, 1040]]], [1.800, [[1733, 1054], [1732, 1066], [1734, 1080]]], [7, [[1774, 1080], [1782, 1085]]],
  [5, [[1447, 1032], [1451, 1048]]], [4, [[1497, 1026], [1502, 1034]]], [5, [[1426, 1076], [1434, 1094]]], [4.5, [[1659, 1036], [1668, 1054]]], [2, [[1668, 1054], [1685, 1078], [1704, 1094]]], [4, [[1705, 1034], [1702, 1042]]],
  [4, [[1635, 1076], [1636, 1079]]], [3, [[1210, 1054], [1208, 1060]]], [3, [[1230, 1064], [1235, 1067]]], [2.5, [[1206, 1075], [1205, 1080]]], [2.5, [[1233, 1077], [1236, 1083]]], [1.500, [[1175, 1091], [1192, 1090]]], [2, [[1502, 1055], [1504, 1058]]], [1, [[1312, 1088], [1316, 1084]]], [1.5, [[1412, 1056], [1420, 1060]]],
];
const CREAM: [number, P[]][] = [[1.2, [[1716, 523], [1724, 528], [1738, 531]]], [1, [[1735, 612], [1738, 622], [1742, 626]]], [3, [[1735, 865], [1737, 870]]], [1.5, [[1734, 451], [1738, 455]]], [0.9, [[1770, 500], [1776, 502]]], [1, [[1721, 1000], [1727, 1003]]], [0.8, [[1721, 808], [1728, 810]]], [1.2, [[1737, 1056], [1739, 1058]]], [1, [[1545, 1063], [1558, 1068], [1568, 1080], [1573, 1094]]], [1.2, [[1266, 1060], [1269, 1062]]], [1, [[1404, 1049], [1408, 1056], [1424, 1064]]], [0.7, [[1414, 1070], [1413, 1080]]], [0.7, [[1501, 1038], [1504, 1044]]], [0.5, [[1522, 1040], [1534, 1034]]], [0.3, [[1103, 1065], [1105, 1078]]], [0.8, [[1142, 1028], [1143, 1032]]]];
const DARK: [number, number, number, number][] = [[1716, 775, 9, 14], [1740, 824, 9, 20], [1738, 905, 8, 34], [1752, 885, 8, 18], [1716, 970, 9, 14], [1752, 679, 5, 4], [1778, 948, 4, 16], [1742, 1008, 6, 12], [1764, 902, 5, 9], [1734, 1066, 5, 20], [1736, 452, 5, 6], [1398, 1067, 8, 3], [1541, 1027, 15, 4], [1635, 1075, 8, 10], [1198, 1062, 6, 3], [1514, 1051, 4, 3], [1205, 1077, 5, 6], [1420, 1056, 6, 4], [1450, 1038, 7, 14], [1733, 1050, 4, 16], [1772, 620, 5, 4], [1756, 583, 10, 4], [1778, 710, 3, 8], [1500, 1032, 7, 6]];
const GREEN: [number, number, number, number][] = [[1760, 745, 34, 66], [1762, 470, 20, 36], [1755, 415, 14, 8], [1712, 490, 12, 22], [1712, 625, 12, 26], [1716, 740, 14, 34], [1708, 840, 16, 50], [1765, 865, 16, 24], [1758, 985, 26, 44], [1718, 1050, 16, 40], [1770, 1020, 14, 34], [1130, 1050, 48, 38], [1220, 1060, 28, 44], [1300, 1060, 44, 44], [1370, 1070, 28, 32], [1470, 1070, 28, 38], [1610, 1060, 26, 38], [1690, 1050, 14, 24]];
const OLIVE: [number, number, number, number][] = [[1735, 625, 20, 34], [1745, 580, 24, 20], [1732, 530, 12, 20], [1738, 850, 10, 60], [1730, 790, 14, 24], [1735, 1030, 12, 40], [1760, 690, 14, 8], [1550, 1050, 22, 30], [1510, 1030, 20, 10], [1138, 1040, 6, 40], [1260, 1045, 12, 30], [1410, 1030, 20, 20], [1750, 1060, 10, 30], [1745, 450, 14, 14]];
const COLS = ["#138a05", "#5c762e", "#003d02", "#4a6fa8", "#dccb85", "#e31f26"];
const bias = (x: number, y: number, l: [number, number, number, number][]) => {
  let v = 0;
  for (const [cx, cy, rx, ry] of l) v = Math.max(v, 1 - Math.hypot((x - cx) / rx, (y - cy) / ry));
  return v;
};
const classify = (x: number, y: number) => {
  for (const r of ROADS) if (segDist(x, y, r) < 1.6) return 5;
  const j = noise(x / 3, y / 3, 7) - 0.5;
  for (const [w, c] of CREAM) if (segDist(x, y, c) + j < w) return 4;
  let dw = 99;
  for (const [w, c] of WATER) dw = Math.min(dw, segDist(x, y, c) - w);
  if (dw + j * 3 < 0) return 3;
  if (dw + j * 7 < 0) return 2;
  const bottom = y > 1020 && x < 1700;
  if (bias(x, y, DARK) + j * 0.9 > 0.28) return 2;
  if (noise(x / 7, y / 6, 21) * 0.75 + noise(x / 20, y / 24, 23) * 0.25 > (bottom ? 0.89 : 0.86)) return 2;
  if (hash(x, y, 99) > 0.9992) return 4;
  const n = noise(x / 18, y / (bottom ? 40 : 20), 1) * 0.5 + noise(x / 8, y / 12, 2) * 0.32 + noise(x / 4, y / 4, 3) * 0.18;
  return n - bias(x, y, GREEN) * 0.42 + bias(x, y, OLIVE) * 0.35 > (bottom ? 0.49 : 0.44) ? 1 : 0;
};
function Raster() {
  const paths = useMemo(() => {
    const out = COLS.map(() => "");
    for (let y = 392; y < 1093; y += 2) {
      const x0 = y < 1018 ? 1704 : 1078;
      let s = x0, c = classify(x0, y);
      for (let x = x0 + 2; x <= 1780; x += 2) {
        const k = x < 1780 ? classify(x, y) : -1;
        if (k !== c) {
          out[c] += `M${s - 1078} ${y - 392}H${x - 1078}v2H${s - 1078}z`;
          s = x;
          c = k;
        }
      }
    }
    return out;
  }, []);
  return (
    <svg width="702" height="701" shapeRendering="crispEdges" className="absolute left-[777px] top-[270px] bg-[#138a05]">
      {paths.map((d, i) => <path key={i} d={d} fill={COLS[i]} />)}
    </svg>
  );
}

/* ---------- dialog ---------- */
const PAGES: [string, string, number][] = [["info", "Information", 62], ["source", "Source", 36], ["paint", "Symbology", 60], ["labels", "Labels", 33], ["masks", "Masks", 33], ["cube", "3D View", 42], ["pie", "Diagrams", 50], ["fields", "Fields", 30], ["attr", "Attributes Form", 83], ["joins", "Joins", 26], ["aux", "Auxiliary Storage", 89], ["actions", "Actions", 40], ["display", "Display", 38], ["broom", "Rendering", 53], ["temporal", "Temporal", 49], ["vars", "Variables", 46], ["elev", "Elevation", 48], ["meta", "Metadata", 50], ["deps", "Dependencies", 74], ["legend", "Legend", 39], ["server", "QGIS Server", 62]];
const Red = ({ className }: { className: string }) => <span className={"pointer-events-none absolute border-4 border-[#e81c1f] " + className} />;
const Spin = ({ dim }: { dim?: boolean }) => (
  <span className="ml-auto flex h-full w-[14px] shrink-0 flex-col items-center justify-center gap-[3px] rounded-r-[2px] border-l border-[#b5b5b5] bg-[#fafafa]">
    <svg width="7" height="4"><path d="M0 4h7L3.500 0z" fill={dim ? "#aaa" : "#666"} /></svg>
    <svg width="7" height="4"><path d="M0 0h7L3.500 4z" fill={dim ? "#ccc" : "#666"} /></svg>
  </span>
);
const Btn = ({ t, w }: { t: string; w: number }) => (
  <span className="relative flex h-[22px] w-[81px] items-center justify-center rounded-[2px] border border-[#ababab] bg-linear-to-b from-white to-[#f0f0f0] pr-[2px]">
    <Fit w={w}>{t}</Fit>
    {t === "OK" && <Red className="-left-[3px] -right-[3px] -top-[3px] -bottom-[3px]" />}
  </span>
);
function Dialog() {
  return (
    <div className="absolute left-[859px] top-[227px] h-[797px] w-[851px]">
      <div className="flex h-full w-full flex-col overflow-hidden rounded-[8px] border border-[#3a3a3a] bg-[#efefef] shadow-[0_22px_44px_rgba(0,0,0,0.36),0_2px_20px_rgba(0,0,0,0.14)]">
        <div className="flex h-[30px] shrink-0 items-center bg-[#3a3a3a] pl-[8px] pr-[9px] text-[12px] text-[#eee]">
          <QLogo s={16} />
          <Fit w={198} className="ml-[5px]">Layer Properties - results — Temporal</Fit>
          <svg width="12" height="12" className="ml-auto"><path d="M1 1l10 10M11 1 1 11" stroke="#eee" strokeWidth="1.100" /></svg>
        </div>
        <div className="flex min-h-0 grow">
          <div className="flex w-[150px] shrink-0 flex-col bg-[#5c5c5c]">
            <div className="flex h-[22px] shrink-0 items-center border border-[#3b9ce8] bg-white pl-[8px]">
              <Mag /><span className="ml-[7px] h-[13px] w-px bg-black" />
            </div>
            <div className="mt-[6px] flex min-h-0 grow">
              <div className="w-[137px] overflow-hidden text-[12px] text-white">
                {PAGES.map(([ic, t, w]) => (
                  <div key={t} className={"flex h-[36px] items-center " + (ic === "temporal" ? "bg-[#efefef] pl-[7px] text-black" : "pl-[5px]")}>
                    <Ic n={ic} s={ic === "temporal" ? 26 : 24} />
                    <Fit w={w} className={ic === "temporal" ? "ml-[7px]" : "ml-[8px]"}>{t}</Fit>
                  </div>
                ))}
              </div>
              <div className="flex w-[13px] flex-col bg-linear-to-r from-white to-[#f0f0f0]">
                <span className="flex h-[14px] shrink-0 items-center justify-center border-b border-[#bbb] bg-[#fafafa]"><Tri className="rotate-180" /></span>
                <span className="grow" />
                <span className="h-[66px] shrink-0 border-y border-[#bbb] bg-[#e3e3e3]" />
                <span className="flex h-[14px] shrink-0 items-center justify-center bg-[#fafafa]"><Tri /></span>
              </div>
            </div>
          </div>
          <div className="flex min-w-0 grow flex-col text-[11px] text-black">
            <div className="relative flex h-[21px] shrink-0 items-center pl-[4px]">
              <span className="mb-[2px]"><Check border={false} /></span><Red className="left-[2px] -top-px h-[20px] w-[18px]" />
              <Fit w={150} className="ml-[6px] mt-px font-bold">Dynamic Temporal Control</Fit>
            </div>
            <div className="ml-[5px] flex h-[713px] w-[691px] shrink-0 flex-col rounded-[2px] border border-[#d6d6d6] bg-[#ececec] pl-[9px] pr-[11px] pt-[10px]">
              <div className="relative flex h-[22px] items-center">
                <span className="w-[72px]"><Fit w={65}>Configuration</Fit></span>
                <span className="flex h-full grow items-center rounded-[2px] border border-[#ababab] bg-linear-to-b from-white to-[#f2f2f2] pl-[3px] pr-[6px]"><Fit w={128}>Single Field with Date/Time</Fit><Tri className="ml-auto" /></span>
                <Red className="-top-[3px] left-[71px] h-[29px] w-[142px]" />
                <Red className="-right-px -top-[3px] h-[27px] w-[25px]" />
              </div>
              <div className="mt-[6px] flex h-[22px] items-center">
                <span className="w-[72px]"><Fit w={26}>Limits</Fit></span>
                <span className="flex h-full grow items-center rounded-[2px] border border-[#ababab] bg-linear-to-b from-white to-[#f2f2f2] pl-[3px] pr-[6px]"><Fit w={172}>Include Start, Exclude End (default)</Fit><Tri className="ml-auto" /></span>
              </div>
              <div className="flex flex-col pl-[10px] pr-[8px]">
                <div className="mt-[12px] flex h-[18px] items-center"><Fit w={602} className="font-bold">Individual features from the layer will be rendered if the field's value falls within the map's temporal range.</Fit></div>
                <div className="mt-[7px] flex h-[18px] items-center"><Fit w={411}>If a duration is set for the events then the event will be considered as occurring from </Fit><Fit w={132} className="italic">Field ≤ t &lt; Field + duration.</Fit></div>
                <div className="relative mt-[4px] flex h-[24px] items-center">
                  <span className="w-[219px]"><Fit w={22}>Field</Fit></span>
                  <span className="flex h-full grow items-center rounded-[2px] border border-[#ababab] bg-linear-to-b from-white to-[#f2f2f2] pl-[6px] pr-[8px]">
                    <svg width="15" height="15" viewBox="0 0 15 15" fill="none"><path d="M.7 2.500h13v11.800H.7z" stroke="#666" strokeWidth="1.300" /><path d="M0 1h3v2.500h8V1h3v3H0z" fill="#666" /><path d="M3 8h2M3 11h2M6 11h1" stroke="#666" strokeWidth="1.500" /><circle cx="10" cy="9.500" r="4" fill="#f8f8f8" stroke="#666" /><path d="M9 8l1.500 1.500L13 8" stroke="#666" /></svg>
                    <Fit w={19} className="ml-[4px]">time</Fit><Tri className="ml-auto" />
                  </span>
                  <Red className="-top-[2px] left-[218px] h-[28px] w-[52px]" />
                  <Red className="-right-px -top-[2px] h-[26px] w-[25px]" />
                </div>
                <div className="mt-[6px] flex h-[22px] items-center text-[#8a8a8a]">
                  <span className="w-[219px] text-black"><Fit w={70}>Event duration</Fit></span>
                  <span className="flex h-[20px] w-[212px] items-center rounded-[2px] border border-[#ababab] bg-[#efefef] pl-[4px]"><Fit w={22}>0.00</Fit><Spin dim /></span>
                  <span className="ml-[6px] flex h-full grow items-center rounded-[2px] border border-[#c3c3c3] bg-linear-to-b from-[#fafafa] to-[#f0f0f0] pl-[3px] pr-[8px]"><Fit w={37}>Minutes</Fit><Tri c="#999" className="ml-auto" /></span>
                </div>
                <div className="mt-[6px] flex flex-col items-start leading-[13px]">
                  <Fit w={633}>Event durations in <i>Months</i> assume a fixed 30-day month length, and durations in <i>Years</i>, <i>Decades</i> or <i>Centuries</i> assume a 365.25-day</Fit>
                  <Fit w={57}>year length.</Fit>
                </div>
                <div className="relative mt-[5px] flex h-[18px] items-center">
                  <Check border={false} /><Red className="-left-[2px] top-0 h-[18px] w-[18px]" /><Fit w={146} className="ml-[5px]">Accumulate features over time</Fit>
                </div>
              </div>
            </div>
            <div className="flex h-[30px] shrink-0 items-center pl-[4px] pr-[3px] pt-px">
              <span className="flex h-[22px] w-[80px] items-center rounded-[2px] border border-[#ababab] bg-linear-to-b from-white to-[#f0f0f0] pl-[20px] pr-[4px]"><Fit w={25}>Style</Fit><Tri className="ml-auto scale-75" /></span>
              <span className="ml-auto flex gap-[5px]"><Btn t="OK" w={15} /><Btn t="Cancel" w={32} /><Btn t="Apply" w={27} /><Btn t="Help" w={22} /></span>
            </div>
          </div>
        </div>
      </div>
      <Red className="-left-[3px] top-[558px] h-[44px] w-[143px]" />
    </div>
  );
}

/* ---------- window ---------- */
export default function App() {
  return (
    <div className="relative flex h-[1391px] w-[2559px] flex-col overflow-hidden bg-[#efefef] font-['Open_Sans','Noto_Sans',sans-serif] text-[12px] leading-none text-[#111]">
      <header className="flex h-[23px] shrink-0 items-center bg-[#f3f3f3] pl-[2px] text-[#888]">
        <QLogo s={16} />
        <Fit w={134} className="ml-[6px]">*Untitled Project — QGIS</Fit>
        <svg width="104" height="14" viewBox="0 0 104 14" fill="none" className="ml-auto mr-[18px] mt-[-3px]" stroke="#888"><path d="M1 7.500h11" /><path d="M47.500 5.500h7v7h-7zM49.500 4V3.500h7.500v7h-1" /><path d="M93 2.500l10 10M103 2.500l-10 10" /></svg>
      </header>
      <nav className="flex h-[20px] shrink-0 items-center gap-[14px] border-b border-[#d5d5d5] pl-[10px] leading-[16px] text-[#999]">
        {MENUS.map(([t, u, w]) => <Fit key={t} w={w}>{t.slice(0, u)}<span className="underline underline-offset-2">{t[u]}</span>{t.slice(u + 1)}</Fit>)}
      </nav>
      <div className="flex h-[39px] shrink-0 items-center border-b border-[#b5b5b5] bg-linear-to-b from-[#fafafa] to-[#efefef]">
        <Handle w="w-[12px] !pl-[2px]" /><Bar items={ROW1} />
      </div>
      <div className="flex h-[40px] shrink-0 items-center border-b-2 border-[#b5b5b5] bg-linear-to-b from-[#fafafa] to-[#efefef]">
        <Handle w="w-[12px] !pl-[2px]" /><Bar items={ROW2} />
        <span className="w-[38px] shrink-0 pl-[27px] pb-1 text-[15px] text-[#333]">»</span>
        <Bar items={["|", "metas", "|", "python"]} />
        <span className="ml-[3px] mr-[3px]"><Ic n="reload" s={21} /></span>
        <Fit w={86} className="text-black">Reload a plugin...</Fit>
        <Tri className="ml-[15px] mr-[3px]" />
        <Bar items={["|", "help"]} />
        <span className="ml-[400px]"><Handle /></span>
      </div>
      <div className="flex min-h-0 grow">
        <aside className="flex w-[294px] shrink-0 flex-col">
          <PanelHead t="Browser" w={43} />
          <div className="flex h-[31px] shrink-0 items-center pb-[2px] pl-[3px]">
            {["addl", "refresh", "funnel", "tup", "info"].map((n) => <Tool key={n} n={n} />)}
          </div>
          <div className="h-[569px] shrink-0 border border-[#b5b5b5] bg-white">
            {TREE.map(([ic, t, w, e]) => (
              <div key={t} className="flex h-[18px] items-center">
                <Exp on={e} /><span className="ml-px mr-[6px] flex"><Ic n={ic} s={16} /></span><Fit w={w} className="pt-px">{t}</Fit>
              </div>
            ))}
          </div>
          <div className="flex h-[7px] shrink-0 items-center justify-center"><svg width="17" height="2"><path d="M0 1h17" stroke="#b0b0b0" strokeDasharray="1 2" /></svg></div>
          <PanelHead t="Layers" w={33} />
          <div className="flex h-[31px] shrink-0 items-center pb-[2px] pl-[3px]">
            <Tool n="paint" /><Tool n="group" /><Tool n="eye" menu /><Tool n="funnel" menu /><Tool n="eps" />
            <span className="flex w-[12px] justify-center"><Tri /></span>
            <Tool n="tdown" /><Tool n="tup" /><Tool n="rml" />
          </div>
          <div className="grow border border-[#b5b5b5] bg-white font-bold text-black">
            <div className="flex h-[18px] items-center bg-[#efefef] pr-[5px]">
              <span className="w-[23px]" /><Check /><span className="ml-[10px] mr-[11px] h-[7px] w-[7px] rounded-full border border-[#555] bg-[#7fae77]" />
              <Fit w={37} className="underline underline-offset-2">results</Fit>
              <span className="ml-auto flex h-4 w-4 items-center justify-center border border-[#ddd] bg-[#f5f5f5]"><svg width="12" height="12" fill="none" stroke="#777"><circle cx="6" cy="6" r="5" /><path d="M6 2.500V6.500h2.500" /></svg></span>
            </div>
            <div className="flex h-[18px] items-center">
              <Exp on /><span className="w-[5px]" /><Check />
              <svg width="13" height="13" viewBox="0 0 12 12" className="ml-[8px] mr-[7px]"><path d="M0 0h12v12H0z" fill="#b9cfe8" /><path d="M0 0h3v3H0zM3 3h3v3H3zM9 3h3v3H9zM6 6h3v3H6zM0 9h6v3H0z" fill="#34506f" /><path d="M6 0h3v3H6zM3 6h3v3H3zM9 9h3v3H9z" fill="#6f93bd" /></svg>
              <Fit w={207}>landcover-2020-classification-clipped</Fit>
            </div>
          </div>
        </aside>
        <div className="flex w-[6px] shrink-0 items-center justify-center"><svg width="2" height="17"><path d="M1 0v17" stroke="#b0b0b0" strokeDasharray="1 2" /></svg></div>
        <main className="relative grow overflow-hidden border-b border-l border-[#b5b5b5] bg-white"><Raster /></main>
      </div>
      <footer className="flex h-[27px] shrink-0 items-center pl-[4px] pt-[2px]">
        <span className="mb-[2px] flex h-[22px] w-[200px] items-center gap-[6px] rounded-[3px] border border-[#ababab] bg-white pl-[8px] text-[#777]"><Mag /><Fit w={111}>Type to locate (Ctrl+K)</Fit></span>
        <span className="ml-auto" />
        <Fit w={53}>Coordinate</Fit>
        <span className="ml-[5px] flex h-[21px] w-[103px] items-center rounded-[2px] border border-[#b5b5b5] bg-white pl-[9px]"><Fit w={83}>1507989, -95238</Fit></span>
        <svg width="16" height="16" viewBox="0 0 16 16" fill="none" stroke="#444" className="ml-[4px] mr-[12px]"><ellipse cx="5" cy="6" rx="2.500" ry="4.500" transform="rotate(-25 5 6)" fill="#999" /><ellipse cx="10" cy="11" rx="2.500" ry="4" transform="rotate(-25 10 11)" fill="#999" /><path d="M2 14 14 1M7 4l6 8" /></svg>
        <Fit w={25}>Scale</Fit>
        <span className="ml-[4px] flex h-[21px] w-[81px] items-center rounded-[2px] border border-[#b5b5b5] bg-white pl-[3px]"><Fit w={41}>1:68764</Fit><span className="ml-auto flex h-full w-[21px] items-center justify-center border-l border-[#b5b5b5] bg-[#f5f5f5]"><Tri /></span></span>
        <svg width="12" height="16" viewBox="0 0 12 16" fill="none" className="ml-[12px] mr-[8px]"><path d="M2.500 7V4.500a3.500 3.500 0 0 1 7 0V7" stroke="#777" strokeWidth="1.800" /><rect y="7" width="12" height="9" rx="1" fill="#666" /></svg>
        <Fit w={45}>Magnifier</Fit>
        <span className="ml-[3px] flex h-[21px] w-[83px] items-center rounded-[2px] border border-[#b5b5b5] bg-white pl-[4px]"><Fit w={29}>100%</Fit><Spin /></span>
        <Fit w={41} className="ml-[10px]">Rotation</Fit>
        <span className="ml-[9px] flex h-[21px] w-[83px] items-center rounded-[2px] border border-[#b5b5b5] bg-white pl-[4px]"><Fit w={25}>0.0 °</Fit><Spin /></span>
        <span className="ml-[7px] mr-[4px]"><Check /></span>
        <Fit w={35}>Render</Fit>
        <svg width="15" height="15" viewBox="0 0 16 16" fill="#c8c8c8" stroke="#555" strokeWidth=".8" className="ml-[15px]"><circle cx="8" cy="8" r="7" /><path d="M1 8h14M2 4.500h12M2 11.500h12M8 1v14M8 1q-7 7 0 14M8 1q7 7 0 14" fill="none" /></svg>
        <Fit w={54} className="ml-[2px]">EPSG:3979</Fit>
        <svg width="17" height="15" viewBox="0 0 17 15" className="ml-[23px] mr-[5px]"><path d="M8.500 0a8 6.500 0 0 1 3 12.500L13 15l-5-2A8 6.500 0 0 1 8.500 0z" fill="#666" /></svg>
      </footer>
      <Dialog />
    </div>
  );
}
